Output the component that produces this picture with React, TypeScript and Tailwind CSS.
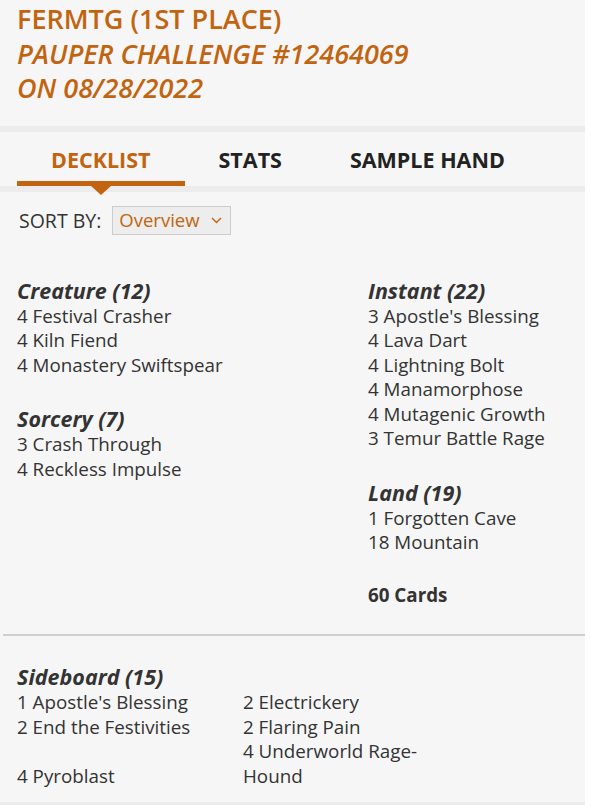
import React from "react";

const ORANGE = "text-[#c2640f]";

type Section = { title: string; cards: string[] };

const left: Section[] = [
  { title: "Creature (12)", cards: ["4 Festival Crasher", "4 Kiln Fiend", "4 Monastery Swiftspear"] },
  { title: "Sorcery (7)", cards: ["3 Crash Through", "4 Reckless Impulse"] },
];

const right: Section[] = [
  {
    title: "Instant (22)",
    cards: [
      "3 Apostle's Blessing",
      "4 Lava Dart",
      "4 Lightning Bolt",
      "4 Manamorphose",
      "4 Mutagenic Growth",
      "3 Temur Battle Rage",
    ],
  },
  { title: "Land (19)", cards: ["1 Forgotten Cave", "18 Mountain"] },
];

const sideboard = [
  "1 Apostle's Blessing",
  "2 Electrickery",
  "2 End the Festivities",
  "2 Flaring Pain",
  "4 Pyroblast",
  "4 Underworld Rage-Hound",
];

function CardSection({ section }: { section: Section }) {
  return (
    <div className="mb-[29px]">
      <h3 className="text-[21.5px] leading-[26px] font-bold italic text-[#333]">{section.title}</h3>
      <ul>
        {section.cards.map((c) => (
          <li key={c} className="text-[18.8px] leading-[24.5px] text-[#333]">
            {c}
          </li>
        ))}
      </ul>
    </div>
  );
}

export default function App() {
  const tabs = ["DECKLIST", "STATS", "SAMPLE HAND"];

  return (
    <div className="min-h-screen bg-white" style={{ fontFamily: '"Open Sans", "Liberation Sans", sans-serif' }}>
      <div className="w-[585px] bg-[#f6f6f6]">
        <header className={`pl-[17px] pt-[2px] pb-[20px] ${ORANGE} text-[27px] leading-[34.5px] font-semibold`}>
          <div>FERMTG (1ST PLACE)</div>
          <div className="italic">PAUPER CHALLENGE #12464069</div>
          <div className="italic">ON 08/28/2022</div>
        </header>

        <div className="h-[6px] bg-[#ececec]" />
        <nav className="flex pl-[17px]">
          {tabs.map((tab, i) => (
            <div
              key={tab}
              className={[
                "relative px-[34px] pt-[14px] pb-[7px] text-[21.5px] leading-[28px] font-bold border-b-[5px]",
                i === 0 ? "text-[#c2640f] border-[#c2640f]" : "text-[#222] border-transparent",
              ].join(" ")}
            >
              {tab}
              {i === 0 ? (
                <span className="absolute left-1/2 top-full -translate-x-1/2 mt-[5px] h-0 w-0 border-x-[10px] border-x-transparent border-t-[9px] border-t-[#c2640f] z-10" />
              ) : null}
            </div>
          ))}
        </nav>
        <div className="h-[6px] bg-[#ececec]" />

        <div className="flex items-center gap-[11px] pl-[19px] mt-[14px]">
          <span className="text-[19.5px] font-medium text-[#333]">SORT BY:</span>
          <div className="flex h-[29px] w-[119px] items-center justify-between border border-[#cccccc] bg-[#ededed] pl-[6px] pr-[8px]">
            <span className={`${ORANGE} text-[18.5px] leading-none`}>Overview</span>
            <svg width="11" height="7" viewBox="0 0 11 7" fill="none">
              <path d="M1 1l4.5 4.5L10 1" stroke="#c2640f" strokeWidth="1.4" />
            </svg>
          </div>
        </div>

        <div className="grid grid-cols-[351px_1fr] pl-[17px] mt-[43px]">
          <div>
            {left.map((s) => (
              <CardSection key={s.title} section={s} />
            ))}
          </div>
          <div>
            {right.map((s) => (
              <CardSection key={s.title} section={s} />
            ))}
            <div className="-mt-[1px] text-[18.8px] leading-[24.5px] font-bold text-[#333]">60 Cards</div>
          </div>
        </div>

        <div className="ml-[3px] mt-[27px] h-[2px] bg-[#cfcfcf]" />

        <div className="pl-[17px] pt-[28px] pb-[14px]">
          <h3 className="text-[21.5px] leading-[26px] font-bold italic text-[#333]">Sideboard (15)</h3>
          <div className="flex w-[452px] flex-wrap items-end">
            {sideboard.map((c) => (
              <div key={c} className="w-[226px] pr-[10px] text-[18.8px] leading-[24.5px] text-[#333]">
                {c}
              </div>
            ))}
          </div>
        </div>
        <div className="h-[3px] bg-[#ececec]" />
      </div>
    </div>
  );
}
